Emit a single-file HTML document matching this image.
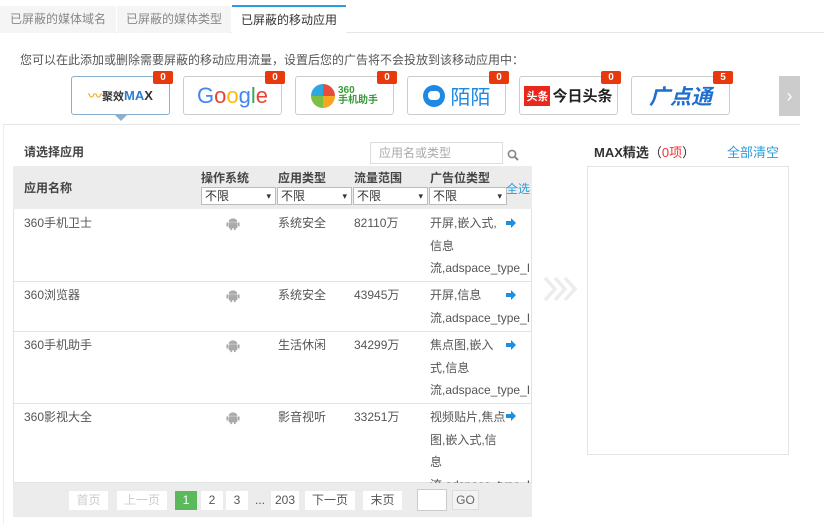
<!DOCTYPE html>
<html><head><meta charset="utf-8"><style>
*{margin:0;padding:0;box-sizing:border-box}
body{width:824px;height:524px;background:#fff;font-family:"Liberation Sans","Noto Sans CJK SC",sans-serif;font-size:12px;color:#555;position:relative;overflow:hidden}
.a{position:absolute;white-space:nowrap}
.tab{position:absolute;top:6px;height:27px;line-height:26px;text-align:center;font-size:12px;color:#888;background:#f5f5f5}
.logo{position:absolute;top:76px;width:99px;height:39px;border:1px solid #ccc;border-radius:3px;background:#fff;display:flex;align-items:center;justify-content:center}
.badge{position:absolute;top:71px;width:20px;height:13px;background:#e8380d;color:#fff;font-size:10px;font-weight:bold;text-align:center;line-height:13px;border-radius:2px}
.sel{position:absolute;top:187px;height:18px;border:1px solid #bbb;background:#fff;font-size:12px;color:#333;line-height:16px;padding-left:3px}
.sel:after{content:"▾";position:absolute;right:4px;font-size:9px;color:#333}
.row{position:absolute;left:13px;width:519px;border-bottom:1px solid #e2e2e2;background:#fff}
.c{position:absolute;color:#555;line-height:22.7px}
.pg{position:absolute;top:491px;height:19px;line-height:19px;background:#fff;text-align:center;color:#555}
</style></head><body>
<div class="a" style="left:0;top:32px;width:824px;height:1px;background:#e6e6e6"></div>
<div class="tab" style="left:0;width:116px">已屏蔽的媒体域名</div>
<div class="tab" style="left:117px;width:114px">已屏蔽的媒体类型</div>
<div class="tab" style="left:232px;width:114px;background:#fff;border-top:2px solid #2a9ddc;color:#333;height:28px;top:5px">已屏蔽的移动应用</div>
<div class="a" style="left:20px;top:51px;color:#555">您可以在此添加或删除需要屏蔽的移动应用流量，设置后您的广告将不会投放到该移动应用中：</div>

<div class="logo" style="left:71px;border-color:#8ab0d0"><span style="color:#f5a623;font-weight:bold;font-size:14px">〰</span><span style="color:#333;font-size:11px;font-weight:bold">聚效</span><span style="color:#2a7fd4;font-weight:bold;font-size:13px">MA</span><span style="color:#333;font-weight:bold;font-size:13px">X</span></div>
<div class="a" style="left:115px;top:115px;width:0;height:0;border-left:6px solid transparent;border-right:6px solid transparent;border-top:6px solid #8ab0d0"></div>
<div class="logo" style="left:183px;font-size:22px;font-family:'Liberation Sans',sans-serif"><span style="color:#4285f4">G</span><span style="color:#ea4335">o</span><span style="color:#fbbc05">o</span><span style="color:#4285f4">g</span><span style="color:#34a853">l</span><span style="color:#ea4335">e</span></div>
<div class="logo" style="left:295px"><span style="display:inline-block;width:24px;height:24px;border-radius:50%;background:conic-gradient(#e84c3d 0 25%,#f5a623 0 50%,#7ac143 0 75%,#2fa8e0 0);margin-right:3px"></span><span style="color:#3a9a3a;font-size:10px;line-height:10px;font-weight:bold">360<br>手机助手</span></div>
<div class="logo" style="left:407px"><span style="display:inline-block;width:22px;height:22px;border-radius:50%;background:#1e88e5;margin-right:6px;position:relative"><span style="position:absolute;left:5px;top:6px;width:12px;height:9px;background:#fff;border-radius:4px"></span></span><span style="color:#1e88e5;font-size:20px">陌陌</span></div>
<div class="logo" style="left:519px"><span style="background:#e8271d;color:#fff;font-size:11px;font-weight:bold;padding:2px 2px">头条</span><span style="color:#222;font-size:15px;font-weight:bold;margin-left:2px">今日头条</span></div>
<div class="logo" style="left:631px"><span style="color:#1f6fd0;font-size:21px;font-weight:bold;font-style:italic">广点通</span></div>
<div class="badge" style="left:153px">0</div><div class="badge" style="left:265px">0</div><div class="badge" style="left:377px">0</div><div class="badge" style="left:489px">0</div><div class="badge" style="left:601px">0</div><div class="badge" style="left:713px">5</div>
<div class="a" style="left:779px;top:76px;width:21px;height:40px;background:#ccc;color:#fff;font-size:18px;line-height:40px;text-align:center">›</div>
<div class="a" style="left:3px;top:124px;width:797px;height:1px;background:#e6e6e6"></div>
<div class="a" style="left:3px;top:125px;width:1px;height:399px;background:#eee"></div>

<div class="a" style="left:24px;top:143px;font-weight:bold;color:#444">请选择应用</div>
<div class="a" style="left:370px;top:142px;width:133px;height:22px;border:1px solid #ddd;color:#aaa;line-height:20px;padding-left:8px">应用名或类型</div>
<svg class="a" style="left:507px;top:149px" width="13" height="13" viewBox="0 0 13 13"><circle cx="5" cy="5" r="3.6" fill="none" stroke="#888" stroke-width="1.6"/><path d="M7.6 7.6L11 11" stroke="#888" stroke-width="2"/></svg>

<div class="a" style="left:13px;top:166px;width:519px;height:43px;background:#ececec"></div>
<div class="a" style="left:24px;top:179px;font-weight:bold;color:#444">应用名称</div>
<div class="a" style="left:201px;top:169px;font-weight:bold;color:#444">操作系统</div>
<div class="a" style="left:278px;top:169px;font-weight:bold;color:#444">应用类型</div>
<div class="a" style="left:354px;top:169px;font-weight:bold;color:#444">流量范围</div>
<div class="a" style="left:430px;top:169px;font-weight:bold;color:#444">广告位类型</div>
<div class="a" style="left:506px;top:180px;color:#2a9ddc">全选</div>
<div class="sel" style="left:201px;width:75px">不限</div>
<div class="sel" style="left:277px;width:75px">不限</div>
<div class="sel" style="left:353px;width:75px">不限</div>
<div class="sel" style="left:429px;width:78px">不限</div>

<div class="row" style="top:209px;height:73px"></div>
<div class="row" style="top:282px;height:50px"></div>
<div class="row" style="top:332px;height:72px"></div>
<div class="row" style="top:404px;height:79px;overflow:hidden"></div>
<div class="a" style="left:13px;top:209px;width:1px;height:274px;background:#e2e2e2"></div>
<div class="a" style="left:531px;top:209px;width:1px;height:274px;background:#e2e2e2"></div>

<svg width="0" height="0" style="position:absolute"><defs><g id="and"><rect x="1" y="5" width="10" height="7" rx="1" fill="#aaa"/><path d="M1 4.5a5 4 0 0 1 10 0z" fill="#aaa"/><rect x="-1.5" y="5" width="2" height="5" rx="1" fill="#aaa"/><rect x="11.5" y="5" width="2" height="5" rx="1" fill="#aaa"/><rect x="3" y="11" width="2" height="3" fill="#aaa"/><rect x="7" y="11" width="2" height="3" fill="#aaa"/></g><g id="arr"><path d="M0 3h5V0l5 5-5 5V7H0z" fill="#1e8fe0"/></g></defs></svg>

<div style="position:absolute;left:0;top:0;width:824px;height:483px;overflow:hidden">
<div class="c" style="left:24px;top:212px">360手机卫士</div>
<svg class="a" style="left:226px;top:217px" width="14" height="14" viewBox="-2 0 16 14"><use href="#and"/></svg>
<div class="c" style="left:278px;top:212px">系统安全</div>
<div class="c" style="left:354px;top:212px">82110万</div>
<div class="c" style="left:430px;top:212px;width:102px;overflow:hidden">开屏,嵌入式,<br>信息<br>流,adspace_type_I</div>
<svg class="a" style="left:506px;top:218px" width="11" height="10"><use href="#arr"/></svg>

<div class="c" style="left:24px;top:284px">360浏览器</div>
<svg class="a" style="left:226px;top:289px" width="14" height="14" viewBox="-2 0 16 14"><use href="#and"/></svg>
<div class="c" style="left:278px;top:284px">系统安全</div>
<div class="c" style="left:354px;top:284px">43945万</div>
<div class="c" style="left:430px;top:284px;width:102px;overflow:hidden">开屏,信息<br>流,adspace_type_I</div>
<svg class="a" style="left:506px;top:290px" width="11" height="10"><use href="#arr"/></svg>

<div class="c" style="left:24px;top:334px">360手机助手</div>
<svg class="a" style="left:226px;top:339px" width="14" height="14" viewBox="-2 0 16 14"><use href="#and"/></svg>
<div class="c" style="left:278px;top:334px">生活休闲</div>
<div class="c" style="left:354px;top:334px">34299万</div>
<div class="c" style="left:430px;top:334px;width:102px;overflow:hidden">焦点图,嵌入<br>式,信息<br>流,adspace_type_I</div>
<svg class="a" style="left:506px;top:340px" width="11" height="10"><use href="#arr"/></svg>

<div class="c" style="left:24px;top:406px">360影视大全</div>
<svg class="a" style="left:226px;top:411px" width="14" height="14" viewBox="-2 0 16 14"><use href="#and"/></svg>
<div class="c" style="left:278px;top:406px">影音视听</div>
<div class="c" style="left:354px;top:406px">33251万</div>
<div class="c" style="left:430px;top:406px;width:102px;overflow:hidden">视频贴片,焦点<br>图,嵌入式,信<br>息<br>流,adspace_type_I</div>
<svg class="a" style="left:506px;top:411px" width="11" height="10"><use href="#arr"/></svg>
</div>

<div class="a" style="left:13px;top:483px;width:519px;height:34px;background:#ececec"></div>
<div class="pg" style="left:69px;width:39px;color:#ccc">首页</div>
<div class="pg" style="left:117px;width:50px;color:#ccc">上一页</div>
<div class="pg" style="left:175px;width:22px;background:#5cb85c;color:#fff">1</div>
<div class="pg" style="left:201px;width:22px">2</div>
<div class="pg" style="left:226px;width:22px">3</div>
<div class="a" style="left:255px;top:491px;line-height:19px">...</div>
<div class="pg" style="left:271px;width:28px">203</div>
<div class="pg" style="left:305px;width:50px">下一页</div>
<div class="pg" style="left:363px;width:39px">末页</div>
<div class="a" style="left:417px;top:489px;width:30px;height:22px;border:1px solid #ccc;background:#fff"></div>
<div class="a" style="left:452px;top:490px;width:27px;height:20px;border:1px solid #ddd;background:#f3f3f3;text-align:center;line-height:18px;color:#666">GO</div>

<svg class="a" style="left:543px;top:276px" width="36" height="26" viewBox="0 0 36 26"><path d="M2 2l10 11-10 11M12 2l10 11-10 11M22 2l10 11-10 11" fill="none" stroke="#ececec" stroke-width="3.5"/></svg>

<div class="a" style="left:594px;top:142px;font-weight:bold;color:#333;font-size:13px">MAX精选<span style="font-weight:normal">（<span style="color:#e33">0项</span>）</span></div>
<div class="a" style="left:727px;top:142px;color:#2a9ddc;font-size:13px">全部清空</div>
<div class="a" style="left:587px;top:166px;width:202px;height:289px;border:1px solid #e4e4e4"></div>
</body></html>
